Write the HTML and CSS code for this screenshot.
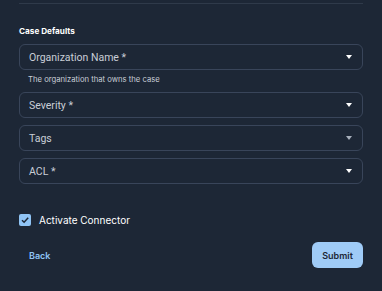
FILE: index.html
```html
<!DOCTYPE html>
<html>
<head>
    <title>Connector Setup</title>
    <link rel="stylesheet" href="styles.css">
</head>
<body>
    <div class="container">
        <hr class="divider">

        <h3 class="section-title">Case Defaults</h3>

        <div class="field">
            <div class="select"><span>Organization Name *</span><span class="arrow"></span></div>
            <div class="helper">The organization that owns the case</div>
        </div>
        <div class="field">
            <div class="select"><span>Severity *</span><span class="arrow"></span></div>
        </div>
        <div class="field">
            <div class="select"><span>Tags</span><span class="arrow dim"></span></div>
        </div>
        <div class="field">
            <div class="select"><span>ACL *</span><span class="arrow"></span></div>
        </div>

        <label class="check-row">
            <span class="checkbox">
                <svg width="10" height="10" viewBox="0 0 10 10"><path d="M2 5.2 L4.1 7.2 L8.2 2.8" fill="none" stroke="#1d2736" stroke-width="1.5"/></svg>
            </span>
            Activate Connector
        </label>

        <div class="actions">
            <button class="btn-text">Back</button>
            <button class="btn-primary">Submit</button>
        </div>
    </div>
</body>
</html>
```

FILE: styles.css
```css
body { margin: 0; background: #1d2736; color: #fff; font-family: Inter, "Noto Sans", sans-serif; }
.container { padding: 0 19px; }
.divider { margin: 0; margin-top: 3px; border: none; border-top: 1px solid #2f3a4a; }
.section-title { margin: 20px 0 0; font-size: 8.2px; font-weight: 700; line-height: 14px; color: #fff; }
.field { margin-top: 7px; }
.field:first-of-type { margin-top: 6px; }
.select { height: 26px; box-sizing: border-box; border: 1px solid #39455a; border-radius: 6px; display: flex; align-items: center; justify-content: space-between; padding: 0 10px 0 9px; font-family: Roboto, sans-serif; font-size: 10.5px; color: #c9ced6; }
.arrow { width: 0; height: 0; border-left: 3.5px solid transparent; border-right: 3.5px solid transparent; border-top: 4px solid #fff; }
.arrow.dim { border-top-color: #a8b0bc; }
.helper { font-size: 7.7px; color: #c9ced6; margin: 5px 0 0 9px; line-height: 10px; }
.check-row { display: flex; align-items: center; gap: 8px; margin-top: 30px; font-size: 10px; line-height: 12px; color: #fff; }
.checkbox { width: 12px; height: 12px; border-radius: 2px; background: #90c4f5; display: flex; align-items: center; justify-content: center; }
.actions { display: flex; justify-content: space-between; align-items: center; margin-top: 16px; }
button { font-family: Inter, "Noto Sans", sans-serif; font-weight: 600; font-size: 9px; cursor: pointer; border: none; }
.btn-text { background: none; color: #90c4f5; padding: 0 10px; }
.btn-primary { background: #9fcbf7; color: #1d2736; width: 51px; height: 26px; border-radius: 6px; }
```
